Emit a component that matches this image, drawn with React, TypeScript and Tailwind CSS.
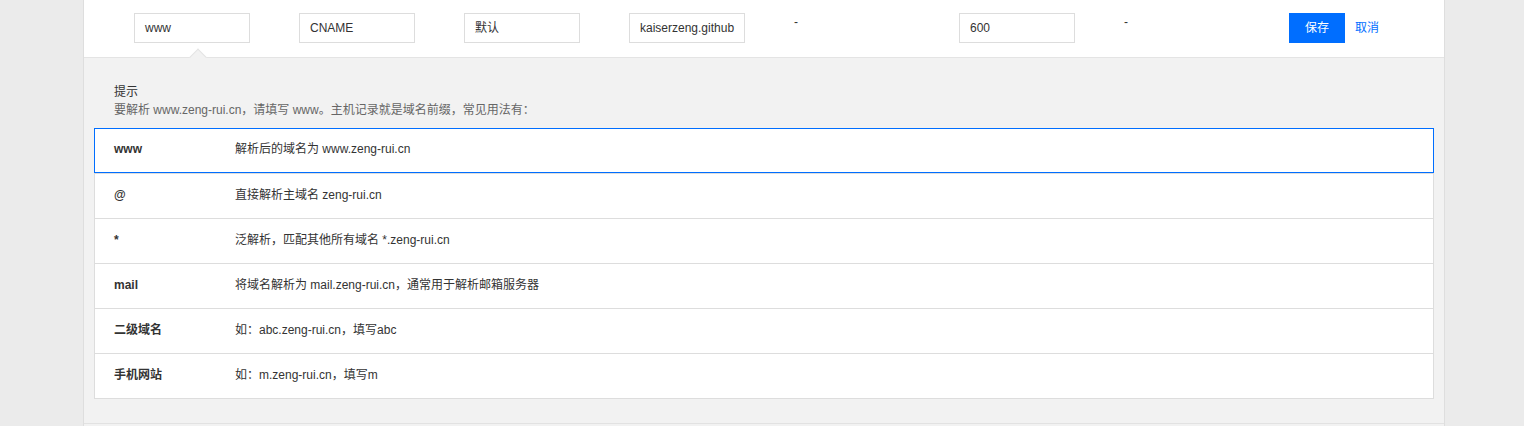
import React from "react";

const font = { fontFamily: '"Liberation Sans", Arial, "Noto Sans CJK SC", sans-serif' };

const rows: [string, string][] = [
  ["www", "解析后的域名为 www.zeng-rui.cn"],
  ["@", "直接解析主域名 zeng-rui.cn"],
  ["*", "泛解析，匹配其他所有域名 *.zeng-rui.cn"],
  ["mail", "将域名解析为 mail.zeng-rui.cn，通常用于解析邮箱服务器"],
  ["二级域名", "如：abc.zeng-rui.cn，填写abc"],
  ["手机网站", "如：m.zeng-rui.cn，填写m"],
];

function Input({ value }: { value: string }) {
  return (
    <div className="w-[116px] h-[30px] border border-[#dddddd] bg-white flex items-center pl-[10px] text-[12px] text-[#333333] whitespace-nowrap overflow-hidden">
      {value}
    </div>
  );
}

export default function App() {
  return (
    <div className="w-[1524px] h-[426px] bg-[#ebebeb] overflow-hidden text-[12px]" style={font}>
      <div className="ml-[83px] w-[1362px] h-[426px] border-l border-r border-[#dedede] bg-[#f2f2f2] flex flex-col">
        <div className="relative h-[58px] bg-white border-b border-[#e4e4e4] flex items-start pt-[13px] pl-[50px]">
          <div className="w-[165px]"><Input value="www" /></div>
          <div className="w-[165px]"><Input value="CNAME" /></div>
          <div className="w-[165px]"><Input value="默认" /></div>
          <div className="w-[165px]"><Input value="kaiserzeng.github" /></div>
          <div className="w-[165px] text-[#333333] leading-[18px]">-</div>
          <div className="w-[165px]"><Input value="600" /></div>
          <div className="w-[165px] text-[#333333] leading-[18px]">-</div>
          <div className="flex items-center gap-[10px]">
            <div className="w-[56px] h-[30px] bg-[#006eff] text-white flex items-center justify-center">保存</div>
            <div className="text-[#006eff]">取消</div>
          </div>
          <div className="absolute left-[108px] top-[51px] w-[12px] h-[12px] rotate-45 bg-[#f2f2f2] border-l border-t border-[#e4e4e4]" />
        </div>
        <div className="px-[10px] pt-[25px]">
          <div className="pl-[20px] text-[#333333] leading-[18px]">提示</div>
          <div className="pl-[20px] text-[#666666] leading-[18px]">要解析 www.zeng-rui.cn，请填写 www。主机记录就是域名前缀，常见用法有：</div>
          <div className="mt-[9px] bg-white border border-[#dddddd]">
            {rows.map(([k, v], i) => (
              <div
                key={k}
                className={
                  i === 0
                    ? "h-[45px] -m-px mb-0 border border-[#006eff] flex items-center pb-[3px]"
                    : "h-[45px] border-t border-[#dddddd] flex items-center pb-[3px]"
                }
              >
                <div className="w-[140px] pl-[19px] font-bold text-[#333333]">{k}</div>
                <div className="text-[#333333]">{v}</div>
              </div>
            ))}
          </div>
        </div>
        <div className="mt-[24px] border-t border-[#e2e2e2]" />
      </div>
    </div>
  );
}
